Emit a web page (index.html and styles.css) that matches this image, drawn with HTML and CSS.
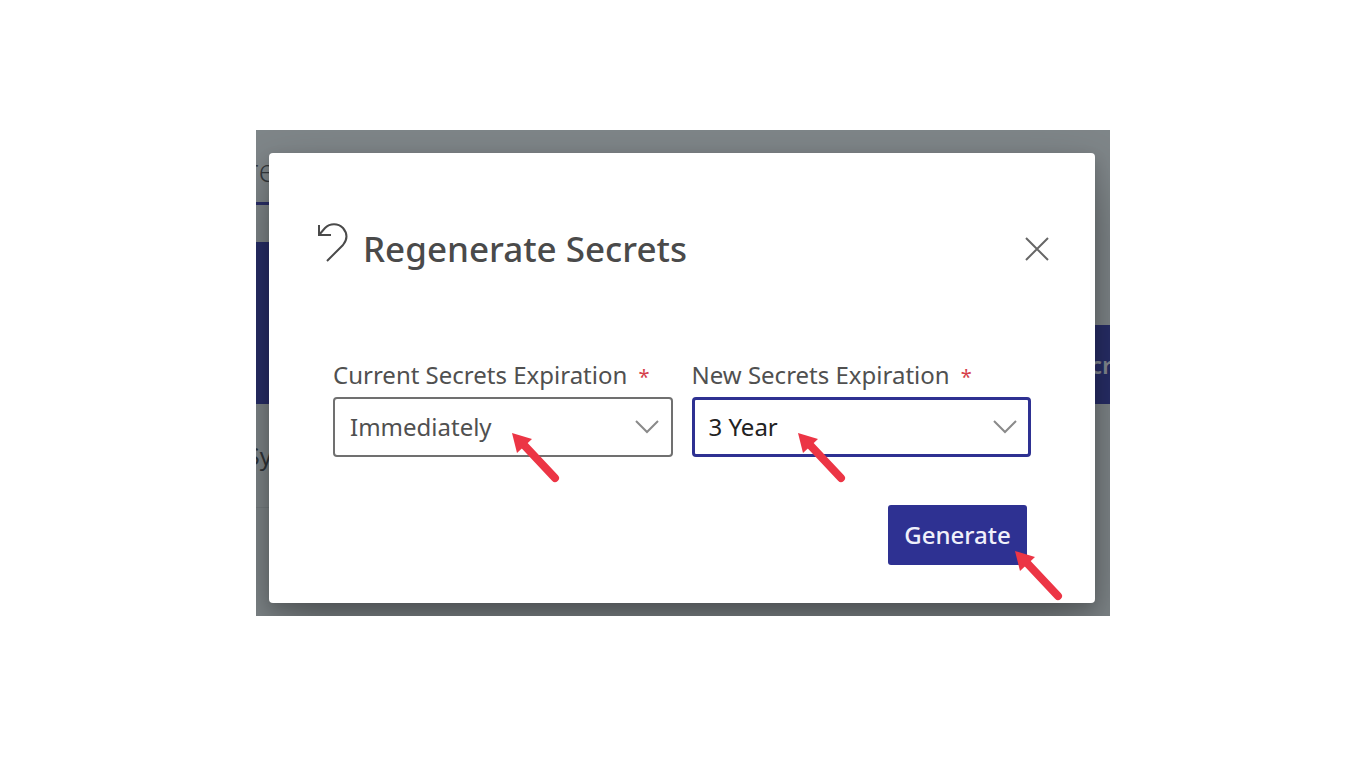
FILE: index.html
```html
<!DOCTYPE html>
<html lang="en">
<head>
    <meta charset="UTF-8">
    <meta name="viewport" content="width=device-width, initial-scale=1.0">
    <title>Regenerate Secrets</title>
    <link rel="stylesheet" href="styles.css">
</head>
<body>
    <svg width="0" height="0" class="defs" aria-hidden="true">
        <symbol id="arrow" viewBox="0 0 48 50">
            <path d="M12 12L43 45" stroke="#ec3545" stroke-width="8" stroke-linecap="round"/>
            <path d="M0 0L20 6L5 20Z" fill="#ec3545"/>
        </symbol>
        <symbol id="chevron" viewBox="0 0 24 14">
            <path d="M1 1L12 12L23 1" fill="none" stroke="#8a8a8a" stroke-width="2"/>
        </symbol>
    </svg>
    <main class="stage">
        <!-- page behind the dialog -->
        <div class="page" aria-hidden="true">
            <div class="tab">re</div>
            <div class="banner">
                <div class="panel"></div>
                <div class="panel-button">cr</div>
            </div>
            <div class="row">Sy</div>
        </div>

        <section class="dialog" role="dialog" aria-labelledby="title">
            <header class="dialog-header">
                <svg class="undo" viewBox="0 0 32 40" aria-hidden="true">
                    <path d="M2 2V12H14M2 12L8 5C13 0 21 0 26 5C31 11 30 17 26 22L10 38" fill="none" stroke="#4a4a4a" stroke-width="2"/>
                </svg>
                <h1 id="title">Regenerate Secrets</h1>
                <button class="close" type="button" aria-label="Close">
                    <svg viewBox="0 0 24 24"><path d="M1 1L23 23M23 1L1 23" stroke="#666" stroke-width="2"/></svg>
                </button>
            </header>
            <form>
                <div class="fields">
                    <div class="field">
                        <label for="current">Current Secrets Expiration <span class="required">*</span></label>
                        <div class="select-box">
                            <select id="current"><option>Immediately</option></select>
                            <svg class="chevron"><use href="#chevron"/></svg>
                            <svg class="arrow arrow-current"><use href="#arrow"/></svg>
                        </div>
                    </div>
                    <div class="field active">
                        <label for="new">New Secrets Expiration <span class="required">*</span></label>
                        <div class="select-box">
                            <select id="new"><option>3 Year</option></select>
                            <svg class="chevron"><use href="#chevron"/></svg>
                            <svg class="arrow arrow-new"><use href="#arrow"/></svg>
                        </div>
                    </div>
                </div>
                <div class="actions">
                    <button class="generate" type="button">Generate</button>
                    <svg class="arrow arrow-generate"><use href="#arrow"/></svg>
                </div>
            </form>
        </section>
    </main>
</body>
</html>
```
FILE: styles.css
```css
* {
    box-sizing: border-box;
}
body {
    margin: 0;
    padding: 130px 20px 20px;
    background-color: #fff;
    font-family: "Noto Sans", "Open Sans", sans-serif;
    font-size: 24px;
    line-height: 32px;
    color: #505050;
}
.defs {
    position: absolute;
}
.stage {
    display: grid;
    max-width: 854px;
    margin: 0 auto;
    overflow: hidden;
    background-color: #7f8689;
}
.page,
.dialog {
    grid-area: 1 / 1;
    min-width: 0;
}
.page {
    overflow: hidden;
}
.tab {
    width: 20px;
    height: 75px;
    padding-top: 20px;
    border-bottom: 3px solid #2a2f68;
    font-family: "Open Sans", sans-serif;
    font-size: 32px;
    font-weight: 300;
    line-height: 40px;
    color: #34383c;
    direction: rtl;
}
.banner {
    display: flex;
    justify-content: space-between;
    align-items: flex-end;
    height: 162px;
    margin-top: 37px;
}
.panel {
    width: 20px;
    height: 162px;
    background-color: #282e68;
}
.panel-button {
    width: 20px;
    height: 79px;
    background-color: #282e68;
    color: #868b93;
    font-weight: 600;
    line-height: 79px;
    overflow: hidden;
}
.row {
    display: flex;
    align-items: center;
    justify-content: flex-end;
    width: 16px;
    height: 104px;
    border-bottom: 1px solid #767d80;
    font-size: 24px;
    color: #303438;
}
.dialog {
    margin: 23px 15px 13px 13px;
    padding: 64px 42px 38px 48px;
    background-color: #fff;
    border-radius: 4px;
    box-shadow: 0 26px 58px rgba(0, 0, 0, 0.32), 0 5px 14px rgba(0, 0, 0, 0.16);
}
.dialog-header {
    display: flex;
    align-items: center;
    height: 64px;
}
.undo {
    width: 32px;
    height: 40px;
    margin-bottom: 12px;
}
h1 {
    flex: 1;
    margin: 0 0 0 14px;
    font-size: 35px;
    font-weight: 500;
    line-height: 48px;
    color: #4a4a4a;
}
.close {
    width: 32px;
    height: 32px;
    padding: 4px;
    border: none;
    background: none;
    cursor: pointer;
}
.close svg {
    display: block;
    width: 24px;
    height: 24px;
}
form {
    padding: 78px 22px 0 16px;
}
.fields {
    display: flex;
    gap: 19px;
}
.field {
    flex: 1;
    min-width: 0;
}
.field label {
    display: block;
    height: 38px;
    white-space: nowrap;
}
.required {
    margin-left: 5px;
    font-size: 20px;
    color: #d6404a;
}
.select-box {
    position: relative;
}
select {
    display: block;
    width: 100%;
    height: 60px;
    padding: 0 15px;
    border: 2px solid #707070;
    border-radius: 4px;
    appearance: none;
    background-color: #fff;
    color: #505050;
    font: inherit;
}
.active select {
    padding: 0 14px;
    border: 3px solid #2e3192;
    color: #222;
}
.chevron {
    position: absolute;
    top: 23px;
    right: 14px;
    width: 24px;
    height: 14px;
    pointer-events: none;
}
.arrow {
    position: absolute;
    width: 48px;
    height: 50px;
    pointer-events: none;
}
.arrow-current {
    top: 36px;
    left: 179px;
}
.arrow-new {
    top: 36px;
    left: 106px;
}
.actions {
    position: relative;
    display: flex;
    justify-content: flex-end;
    margin-top: 48px;
    padding-right: 4px;
}
.generate {
    width: 139px;
    height: 60px;
    padding: 0;
    border: none;
    border-radius: 3px;
    background-color: #2e3192;
    color: #f0f0fa;
    font: inherit;
    font-weight: 500;
    cursor: pointer;
}
.arrow-generate {
    top: 46px;
    right: -32px;
}
```
